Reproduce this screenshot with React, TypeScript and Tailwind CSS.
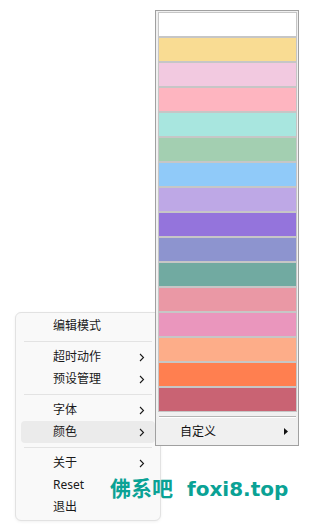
import React from "react";

const swatches = [
  "#ffffff",
  "#f9dc93",
  "#f2c9e0",
  "#feb5c0",
  "#a8e6df",
  "#a3cfb1",
  "#90caf9",
  "#bea8e6",
  "#9474dc",
  "#8d94cf",
  "#71aaa1",
  "#ea98a5",
  "#ea96bd",
  "#fdad89",
  "#ff7f50",
  "#c96373",
];

const Chevron = () => (
  <svg width="6" height="9" viewBox="0 0 6 9" className="shrink-0">
    <path d="M1 1 L4.5 4.5 L1 8" fill="none" stroke="#1a1a1a" strokeWidth="1.1" />
  </svg>
);

type Item = { label: string; arrow?: boolean; active?: boolean };

const MenuItem = ({ label, arrow, active }: Item) => (
  <div
    className={`h-[22px] flex items-center justify-between pl-[32px] pr-[10px] rounded-[4px] text-[12px] text-[#1a1a1a] ${
      active ? "bg-[#ebebeb]" : ""
    }`}
  >
    <span className="leading-none">{label}</span>
    {arrow ? <Chevron /> : null}
  </div>
);

const Sep = () => <div className="h-px bg-[#e3e3e3] mx-[3px] my-[4px]" />;

export default function App() {
  return (
    <div
      className="relative w-[315px] h-[528px] overflow-hidden bg-white"
      style={{ fontFamily: '"Noto Sans", "Noto Sans CJK SC", sans-serif' }}
    >
      {/* context menu */}
      <div className="absolute left-[15px] top-[312px] w-[146px] h-[209px] bg-[#f9f9f9] border border-[#e2e2e2] rounded-[6px] px-[5px] pt-[2px] pb-[1px] shadow-[0_1px_3px_rgba(0,0,0,0.06)]">
        <MenuItem label="编辑模式" />
        <Sep />
        <MenuItem label="超时动作" arrow />
        <MenuItem label="预设管理" arrow />
        <Sep />
        <MenuItem label="字体" arrow />
        <MenuItem label="颜色" arrow active />
        <Sep />
        <MenuItem label="关于" arrow />
        <MenuItem label="Reset" />
        <MenuItem label="退出" />
      </div>

      {/* color submenu */}
      <div className="absolute left-[155px] top-[10px] w-[144px] bg-[#f0f0f0] border border-[#a0a0a0] pt-[1px] pl-[2px] pr-[1px]">
        <div className="flex flex-col">
          {swatches.map((c, i) => (
            <div
              key={i}
              className="h-[25px] w-[139px] border border-[#c6c6c6]"
              style={{ backgroundColor: c }}
            />
          ))}
        </div>
        <div className="h-px bg-[#b4b4b4] mt-[4px] mx-px" />
        <div className="h-px bg-white mx-px" />
        <div className="h-[27px] flex items-center justify-between pl-[22px] pr-[9px] text-[12px] text-[#111]">
          <span className="leading-none">自定义</span>
          <svg width="4" height="7" viewBox="0 0 4 7">
            <path d="M0 0 L4 3.5 L0 7 Z" fill="#111" />
          </svg>
        </div>
      </div>

      {/* watermark */}
      <div className="absolute left-[110px] top-[477px] flex items-baseline text-[#0aa295] font-bold leading-none whitespace-nowrap">
        <span className="text-[21px]" style={{ fontFamily: '"Noto Sans CJK SC", sans-serif' }}>
          佛系吧
        </span>
        <span className="text-[20px] ml-[14px]" style={{ fontFamily: '"DejaVu Sans", sans-serif' }}>
          foxi8.top
        </span>
      </div>
    </div>
  );
}
